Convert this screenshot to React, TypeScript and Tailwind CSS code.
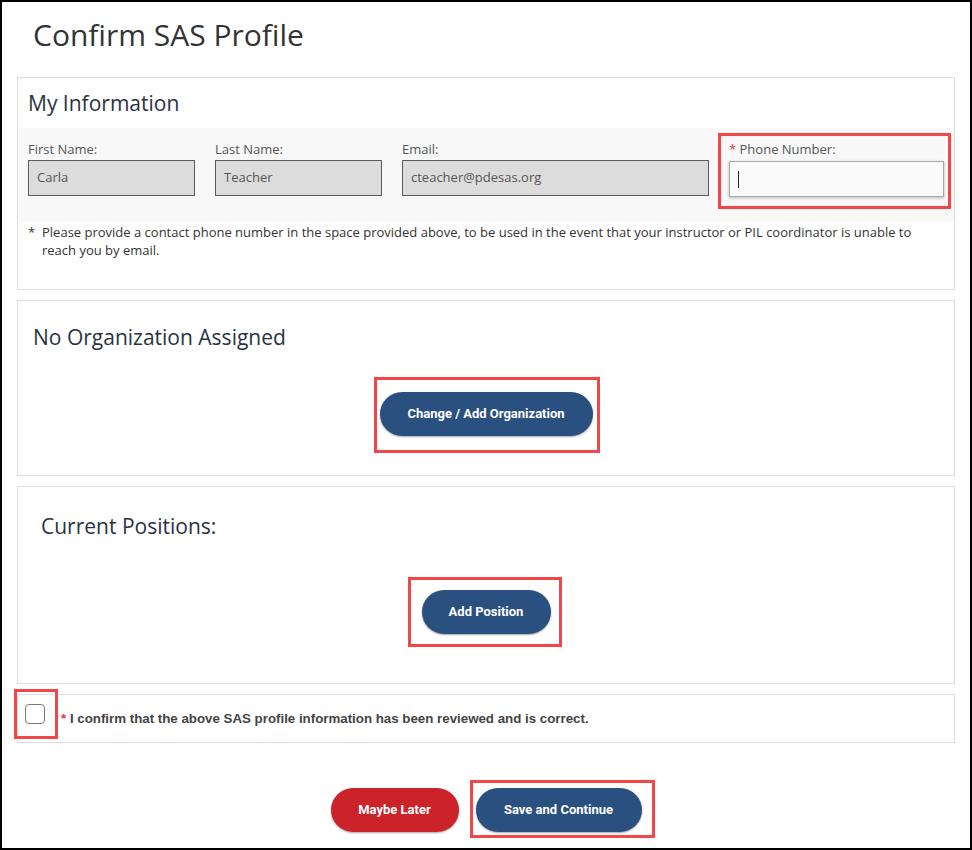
import React from 'react';

const Highlight: React.FC<{ className: string }> = ({ className }) => (
  <span className={`pointer-events-none absolute border-[3px] border-[#f2464a] ${className}`} />
);

interface FieldProps {
  label: string;
  value: string;
  width: string;
}

const ReadOnlyField: React.FC<FieldProps> = ({ label, value, width }) => (
  <div className={width}>
    <div className="h-[16px] text-[13px] leading-[16px] text-[#555]">{label}</div>
    <div className="mt-[3px] flex h-[36px] items-center border border-[#5a5a5a] bg-[#dcdcdc] pl-[8px] text-[13px] text-[#555]">
      {value}
    </div>
  </div>
);

const PillButton: React.FC<{ children: React.ReactNode; className: string }> = ({ children, className }) => (
  <button
    className={`h-[44px] rounded-full font-['Roboto',sans-serif] text-[13px] font-bold text-white shadow-[0_1px_2px_rgba(0,0,0,0.35)] ${className}`}
  >
    {children}
  </button>
);

export default function App() {
  return (
    <div className="h-[850px] w-[972px] border-2 border-black bg-white px-[15px] font-['Open_Sans',sans-serif]">
      <h1 className="pl-[16px] pt-[16px] text-[30px] leading-[34px] text-[#333]">Confirm SAS Profile</h1>

      {/* My Information */}
      <section className="mt-[25px] border border-[#dddddd] pt-[12px]">
        <h2 className="h-[26px] pl-[10px] text-[21px] leading-[26px] text-[#2a3242]">My Information</h2>
        <div className="mt-[12px] flex h-[94px] gap-[20px] bg-[#f8f8f8] px-[10px] pt-[13px]">
          <ReadOnlyField label="First Name:" value="Carla" width="w-[167px]" />
          <ReadOnlyField label="Last Name:" value="Teacher" width="w-[167px]" />
          <ReadOnlyField label="Email:" value="cteacher@pdesas.org" width="w-[307px]" />
          <div className="relative h-[55px] w-[215px]">
            <div className="h-[16px] text-[13px] leading-[16px] text-[#555]">
              <span className="text-[#e03a3a]">*</span> Phone Number:
            </div>
            <div className="mt-[4px] flex h-[36px] items-center border border-[#a8a8a8] bg-[#fafafa] pl-[8px] shadow-[0_1px_3px_rgba(0,0,0,0.25)]">
              <span className="h-[17px] w-px bg-[#222]" />
            </div>
            <Highlight className="-left-[11px] -right-[7px] -top-[8px] -bottom-[13px]" />
          </div>
        </div>
        <div className="flex px-[10px] pb-[30px] pt-[1px] text-[13px] leading-[18px] text-[#333]">
          <span className="w-[14px] shrink-0">*</span>
          <p>
            Please provide a contact phone number in the space provided above, to be used in the event that your
            instructor or PIL coordinator is unable to reach you by email.
          </p>
        </div>
      </section>

      {/* Organization */}
      <section className="mt-[10px] flex flex-col border border-[#dddddd] pb-[39px] pt-[23px]">
        <h2 className="pl-[15px] text-[21px] leading-[26px] text-[#2a3242]">No Organization Assigned</h2>
        <div className="relative mx-auto mt-[42px]">
          <PillButton className="w-[213px] bg-[#2a5080]">Change / Add Organization</PillButton>
          <Highlight className="-left-[6px] -right-[7px] -top-[15px] -bottom-[17px]" />
        </div>
      </section>

      {/* Positions */}
      <section className="mt-[10px] flex flex-col border border-[#dddddd] pb-[49px] pt-[26px]">
        <h2 className="pl-[23px] text-[21px] leading-[26px] text-[#2a3242]">Current Positions:</h2>
        <div className="relative mx-auto mt-[51px]">
          <PillButton className="w-[129px] bg-[#2a5080]">Add Position</PillButton>
          <Highlight className="-left-[14px] -right-[11px] -top-[13px] -bottom-[13px]" />
        </div>
      </section>

      {/* Confirmation */}
      <section className="mt-[10px] flex h-[49px] items-start border border-[#dddddd] pl-[7px]">
        <div className="relative mt-[9px]">
          <div className="h-[20px] w-[20px] rounded-[4px] border-[1.5px] border-[#7a7a7a] bg-white" />
          <Highlight className="-left-[11px] -right-[13px] -top-[15px] -bottom-[15px]" />
        </div>
        <p className="ml-[16px] mt-[16px] font-['Liberation_Sans',sans-serif] text-[13.3px] font-bold leading-[16px] text-[#444]">
          <span className="text-[#e03a3a]">*</span> I confirm that the above SAS profile information has been reviewed and is
          correct.
        </p>
      </section>

      <div className="mt-[45px] flex justify-center gap-[17px]">
        <PillButton className="w-[128px] bg-[#cc2229]">Maybe Later</PillButton>
        <div className="relative">
          <PillButton className="w-[166px] bg-[#2a5080]">Save and Continue</PillButton>
          <Highlight className="-left-[6px] -right-[13px] -top-[8px] -bottom-[6px]" />
        </div>
      </div>
    </div>
  );
}
